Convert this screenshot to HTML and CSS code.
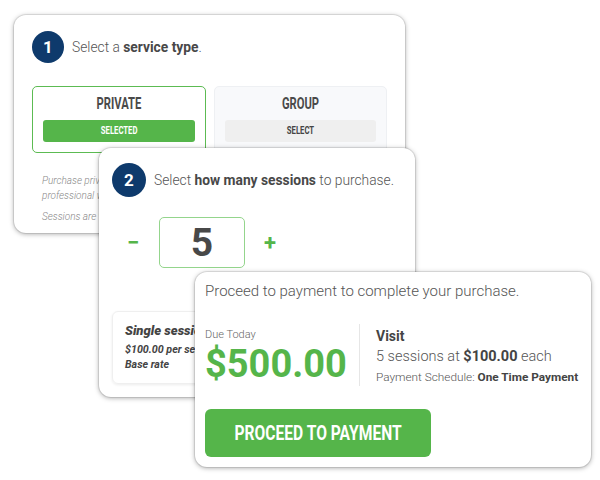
FILE: index.html
```html
<!DOCTYPE html>
<html lang="en">
<head>
<meta charset="UTF-8">
<meta name="viewport" content="width=device-width, initial-scale=1.0">
<title>Purchase Sessions</title>
<link rel="stylesheet" href="styles.css">
</head>
<body>

<div class="stage">

  <!-- step 1 -->
  <div class="card card-type">
    <div class="step">
      <span class="step-num">1</span>
      <p>Select a <b>service type</b>.</p>
    </div>
    <div class="options">
      <div class="option active">
        <h3><span class="cond">PRIVATE</span></h3>
        <span class="pick"><span class="cond">SELECTED</span></span>
      </div>
      <div class="option">
        <h3><span class="cond">GROUP</span></h3>
        <span class="pick"><span class="cond">SELECT</span></span>
      </div>
    </div>
    <div class="note">
      <p>Purchase private sessions to work one-on-one with a<br>professional who will guide you through every visit.</p>
      <p>Sessions are valid for twelve months from purchase.</p>
    </div>
  </div>

  <!-- step 2 -->
  <div class="card card-count">
    <div class="step">
      <span class="step-num">2</span>
      <p>Select <b>how many sessions</b> to purchase.</p>
    </div>
    <div class="stepper">
      <span class="step-btn">−</span>
      <span class="count">5</span>
      <span class="step-btn">+</span>
    </div>
    <div class="rate">
      <strong>Single session</strong>
      <em>$100.00 per session</em>
      <em>Base rate</em>
    </div>
  </div>

  <!-- step 3 -->
  <div class="card card-pay">
    <p class="lead">Proceed to payment to complete your purchase.</p>
    <div class="summary">
      <div class="due">
        <span class="due-label">Due Today</span>
        <span class="due-total">$500.00</span>
      </div>
      <div class="detail">
        <b class="detail-title">Visit</b>
        <p class="detail-line">5 sessions at <b>$100.00</b> each</p>
        <p class="detail-small">Payment Schedule: <b>One Time Payment</b></p>
      </div>
    </div>
    <button type="button" class="pay-btn"><span class="cond">PROCEED TO PAYMENT</span></button>
  </div>

</div>

</body>
</html>
```

FILE: styles.css
```css
/* page */
body {
  margin: 0;
  background: #fff;
  font-family: Roboto, "Liberation Sans", sans-serif;
  color: #555;
}

p {
  margin: 0;
}

.stage {
  position: relative;
  width: 600px;
  height: 480px;
}

/* cards sit over each other like windows */
.card {
  position: absolute;
  box-sizing: border-box;
  background: #fff;
  border-radius: 12px;
  box-shadow: 0 0 0 1px rgba(0, 0, 0, .08), 0 1px 5px rgba(0, 0, 0, .35);
}

.card-type {
  left: 14px;
  top: 15px;
  width: 391px;
  height: 218px;
  padding: 16px 18px 0;
}

.card-count {
  left: 99px;
  top: 148px;
  width: 316px;
  height: 249px;
  padding: 15px 13px 0;
}

.card-pay {
  left: 195px;
  top: 272px;
  width: 396px;
  height: 195px;
  padding: 9px 10px 0;
}

/* numbered step heading */
.step {
  display: flex;
  align-items: center;
  gap: 8px;
  font-size: 13.8px;
  font-weight: 300;
  color: #555;
}

.step b {
  font-weight: 700;
  color: #484848;
}

.step-num {
  width: 32px;
  height: 32px;
  border-radius: 50%;
  background: #0e3a6c;
  color: #fff;
  font-size: 17px;
  font-weight: 700;
  display: flex;
  align-items: center;
  justify-content: center;
  flex-shrink: 0;
}

.card-count .step-num {
  width: 34px;
  height: 34px;
}

/* narrow caps used on labels and buttons */
.cond {
  display: inline-block;
  font-weight: 700;
  transform: scaleX(.7);
  white-space: nowrap;
}

/* service type boxes */
.options {
  display: flex;
  gap: 8px;
  margin-top: 23px;
}

.option {
  box-sizing: border-box;
  width: 174px;
  height: 67px;
  padding: 7px 10px 0;
  border: 1.5px solid #eef0f3;
  border-radius: 5px;
  background: #f8f9fb;
  text-align: center;
}

.option.active {
  border-color: #5cbb52;
  background: #fff;
}

.option h3 {
  margin: 0 0 6px;
  font-size: 16px;
  line-height: 20px;
  color: #4a4a4a;
}

.pick {
  display: block;
  height: 22px;
  line-height: 22px;
  border-radius: 3px;
  background: #efefef;
  color: #444;
  font-size: 11px;
}

.option.active .pick {
  background: #55b54a;
  color: #fff;
}

.note {
  margin-top: 20px;
  padding-left: 10px;
  font-size: 10px;
  font-style: italic;
  font-weight: 300;
  line-height: 15px;
  color: #888;
}

.note p + p {
  margin-top: 6px;
}

/* session counter */
.stepper {
  display: flex;
  align-items: center;
  margin-top: 20px;
  padding-left: 11px;
}

.step-btn {
  width: 20px;
  text-align: center;
  font-size: 22px;
  font-weight: 700;
  color: #55b54a;
}

.count {
  box-sizing: border-box;
  width: 86px;
  height: 51px;
  margin: 0 15px 0 16px;
  border: 1.5px solid #94d58c;
  border-radius: 5px;
  display: flex;
  align-items: center;
  justify-content: center;
  font-size: 39px;
  font-weight: 700;
  color: #484848;
}

.rate {
  width: 170px;
  margin-top: 43px;
  padding: 10px 12px 11px;
  border: 1px solid #efefef;
  border-radius: 6px;
  box-shadow: 0 1px 3px rgba(0, 0, 0, .08);
  display: flex;
  flex-direction: column;
  font-style: italic;
  font-weight: 700;
  color: #444;
}

.rate strong {
  font-size: 13px;
  line-height: 18px;
  margin-bottom: 2px;
}

.rate em {
  font-size: 10.7px;
  line-height: 15px;
}

/* payment summary */
.lead {
  font-size: 15px;
  font-weight: 300;
  line-height: 20px;
  color: #555;
}

.summary {
  display: flex;
  margin-top: 23px;
}

.due {
  width: 154px;
  height: 62px;
  display: flex;
  flex-direction: column;
  border-right: 1px solid #e6e6e6;
}

.due-label {
  margin-top: 4px;
  font-size: 11px;
  font-weight: 300;
  color: #666;
}

.due-total {
  margin-top: 3px;
  font-size: 38px;
  font-weight: 700;
  line-height: 40px;
  color: #55b54a;
}

.detail {
  padding-left: 16px;
  color: #555;
}

.detail-title {
  display: block;
  margin-top: 2px;
  font-size: 14px;
  line-height: 20px;
  color: #444;
}

.detail-line {
  font-size: 14.5px;
  font-weight: 300;
  line-height: 22px;
}

.detail-line b,
.detail-small b {
  font-weight: 700;
  color: #444;
}

.detail-small {
  font-size: 11.8px;
  font-weight: 300;
  line-height: 18px;
}

.pay-btn {
  display: block;
  width: 226px;
  height: 48px;
  margin-top: 23px;
  border: none;
  border-radius: 6px;
  background: #55b54a;
  color: #fff;
  font-family: Roboto, "Liberation Sans", sans-serif;
  font-size: 20px;
  cursor: pointer;
}

.pay-btn .cond {
  transform: scaleX(.78);
}
```
